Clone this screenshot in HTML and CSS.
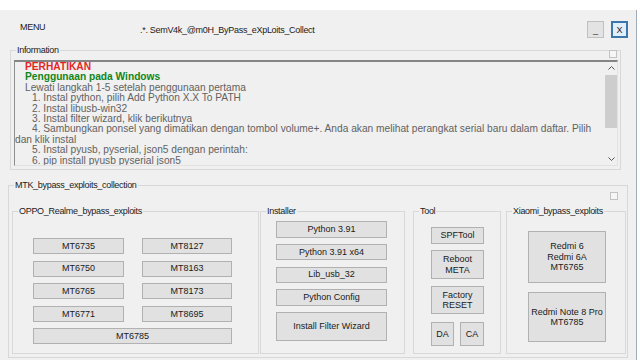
FILE: index.html
```html
<!DOCTYPE html>
<html>
  <head>
    <meta charset="utf-8">
    <title>SemV4k ByPass eXpLoits Collect</title>
    <link rel="stylesheet" href="styles.css">
  </head>
  <body>
    <div class="window">
      <div class="titlebar">
        <span class="menu">MENU</span>
        <span class="title">.*. SemV4k_@m0H_ByPass_eXpLoits_Collect</span>
        <div class="win-buttons">
          <button class="wbtn">_</button>
          <button class="wbtn close">X</button>
        </div>
      </div>

      <!-- caja de informacion -->
      <fieldset class="group info">
        <legend>Information</legend>
        <span class="check info-check"></span>
        <div class="textbox">
          <div class="lines">
            <div class="ind1 red">PERHATIKAN</div>
            <div class="ind1 green">Penggunaan pada Windows</div>
            <div class="ind1">Lewati langkah 1-5 setelah penggunaan pertama</div>
            <div class="ind2">1. Instal python, pilih Add Python X.X To PATH</div>
            <div class="ind2">2. Instal libusb-win32</div>
            <div class="ind2">3. Instal filter wizard, klik berikutnya</div>
            <div class="ind2">4. Sambungkan ponsel yang dimatikan dengan tombol volume+. Anda akan melihat perangkat serial baru dalam daftar. Pilih</div>
            <div>dan klik instal</div>
            <div class="ind2">5. Instal pyusb, pyserial, json5 dengan perintah:</div>
            <div class="ind2">6. pip install pyusb pyserial json5</div>
          </div>
          <div class="scrollbar">
            <span class="arrow">
              <svg width="7" height="4" viewBox="0 0 7 4"><polyline points="0.5,3.5 3.5,0.5 6.5,3.5" fill="none" stroke="#555" stroke-width="1"/></svg>
            </span>
            <span class="thumb"></span>
            <span class="arrow down">
              <svg width="7" height="4" viewBox="0 0 7 4"><polyline points="0.5,0.5 3.5,3.5 6.5,0.5" fill="none" stroke="#555" stroke-width="1"/></svg>
            </span>
          </div>
        </div>
      </fieldset>

      <!-- exploits -->
      <fieldset class="group mtk">
        <legend>MTK_bypass_exploits_collection</legend>
        <span class="check mtk-check"></span>
        <div class="subgroups">
          <fieldset class="group oppo">
            <legend>OPPO_Realme_bypass_exploits</legend>
            <div class="oppo-body">
              <button class="btn">MT6735</button>
              <button class="btn">MT8127</button>
              <button class="btn">MT6750</button>
              <button class="btn">MT8163</button>
              <button class="btn">MT6765</button>
              <button class="btn">MT8173</button>
              <button class="btn">MT6771</button>
              <button class="btn">MT8695</button>
              <button class="btn wide">MT6785</button>
            </div>
          </fieldset>

          <fieldset class="group installer">
            <legend>Installer</legend>
            <div class="installer-body">
              <button class="btn h17">Python 3.91</button>
              <button class="btn h16">Python 3.91 x64</button>
              <button class="btn h16">Lib_usb_32</button>
              <button class="btn h17">Python Config</button>
              <button class="btn h29">Install Filter Wizard</button>
            </div>
          </fieldset>

          <fieldset class="group tool">
            <legend>Tool</legend>
            <div class="tool-body">
              <button class="btn spf">SPFTool</button>
              <button class="btn reboot">Reboot<br>META</button>
              <button class="btn factory">Factory<br>RESET</button>
              <div class="pair">
                <button class="btn da">DA</button>
                <button class="btn ca">CA</button>
              </div>
            </div>
          </fieldset>

          <fieldset class="group xiaomi">
            <legend>Xiaomi_bypass_exploits</legend>
            <div class="xiaomi-body">
              <button class="btn redmi6">Redmi 6<br>Redmi 6A<br>MT6765</button>
              <button class="btn note8">Redmi Note 8 Pro<br>MT6785</button>
            </div>
          </fieldset>
        </div>
      </fieldset>
    </div>
  </body>
</html>
```

FILE: styles.css
```css
body {
  margin: 0;
  background: #ffffff;
  font-family: "Liberation Sans", Arial, sans-serif;
  color: #1a1a1a;
}
.window {
  margin-top: 10px;
  width: 636px;
  height: 350px;
  background: #f0f0f0;
  border-right: 1px solid #9eabb9;
  overflow: hidden;
}
.titlebar {
  display: flex;
  align-items: flex-start;
  height: 35px;
  padding-left: 20px;
  font-size: 9px;
  letter-spacing: -0.3px;
  line-height: 10px;
}
.menu {
  width: 120px;
  margin-top: 12px;
}
.title {
  flex: 1;
  margin-top: 15px;
}
.win-buttons {
  display: flex;
  gap: 7px;
  margin-top: 11px;
  margin-right: 8px;
}
.wbtn {
  width: 17px;
  height: 17px;
  padding: 0;
  box-sizing: border-box;
  background: #e3e3e3;
  border: 1px solid #c0c0c0;
  font-family: "Liberation Sans", Arial, sans-serif;
  font-size: 9px;
  color: #333;
  line-height: 10px;
}
.wbtn.close {
  border: 2px solid #3a77ad;
  background: #e2eefa;
  color: #222;
}

/* group box */
.group {
  position: relative;
  margin: 0;
  padding: 0;
  min-width: 0;
  box-sizing: border-box;
  border: 1px solid #d8d8d8;
}
.group > legend {
  margin-left: 5px;
  padding: 0 1px;
  font-size: 9px;
  line-height: 10px;
  letter-spacing: -0.3px;
  color: #1a1a1a;
}
.check {
  position: absolute;
  width: 8px;
  height: 8px;
  border: 1px solid #c3c3c3;
  background: #f6f6f6;
  box-sizing: border-box;
}
.info-check {
  top: -5px;
  right: 3px;
}
.mtk-check {
  top: 2px;
  right: 9px;
}

.info {
  margin-left: 10px;
  width: 611px;
  height: 125px;
}
.textbox {
  display: flex;
  margin: 5px 0 0 3px;
  width: 604px;
  height: 106px;
  box-sizing: border-box;
  border-top: 2px solid #858585;
  border-left: 1px solid #8e8e8e;
  border-right: 1px solid #e2e2e2;
  border-bottom: 1px solid #e2e2e2;
  background: #f0f0f0;
}
.lines {
  flex: 1;
  overflow: hidden;
  white-space: nowrap;
  font-size: 10.2px;
  line-height: 10.4px;
  color: #626262;
}
.ind1 {
  padding-left: 10px;
}
.ind2 {
  padding-left: 17px;
}
.red {
  color: #e3261f;
  font-weight: bold;
}
.green {
  color: #10861a;
  font-weight: bold;
}
.scrollbar {
  display: flex;
  flex-direction: column;
  width: 12px;
  background: #f0f0f0;
}
.arrow {
  display: flex;
  align-items: center;
  justify-content: center;
  height: 12px;
}
.thumb {
  height: 53px;
  margin: 1px 0;
  background: #cdcdcd;
}
.arrow.down {
  margin-top: auto;
}

.mtk {
  margin: 10px 8px 0 8px;
  width: 620px;
  height: 178px;
}
.subgroups {
  display: flex;
  padding: 16px 0 0 3px;
}
.subgroups .group {
  height: 148px;
}
.oppo {
  width: 247px;
}
.installer {
  width: 145px;
  margin-left: 1px;
}
.tool {
  width: 88px;
  margin-left: 8px;
}
.xiaomi {
  width: 120px;
  margin-left: 5px;
}

.btn {
  padding: 0;
  box-sizing: border-box;
  background: #e1e1e1;
  border: 1px solid #b1b1b1;
  font-family: "Liberation Sans", Arial, sans-serif;
  font-size: 9px;
  line-height: 10.5px;
  color: #1a1a1a;
}

.oppo-body {
  display: grid;
  grid-template-columns: 91px 90px;
  grid-auto-rows: 16px;
  column-gap: 18px;
  row-gap: 6.6px;
  padding: 22px 0 0 20px;
}
.oppo-body .wide {
  grid-column: 1 / 3;
}

.installer-body {
  display: flex;
  flex-direction: column;
  gap: 6.3px;
  padding: 5px 0 0 15px;
}
.installer-body .btn {
  width: 111px;
}
.h16 { height: 16px; }
.h17 { height: 17px; }
.h29 { height: 29px; }

.tool-body {
  display: flex;
  flex-direction: column;
  padding: 11px 0 0 17px;
}
.tool-body .btn {
  width: 53px;
}
.spf { height: 17px; }
.reboot { height: 29px; margin-top: 6px; }
.factory { height: 28px; margin-top: 7px; }
.pair {
  display: flex;
  gap: 6px;
  margin-top: 8px;
}
.tool-body .pair .da { width: 23px; height: 24px; }
.tool-body .pair .ca { width: 24px; height: 24px; }

.xiaomi-body {
  display: flex;
  flex-direction: column;
  padding: 15px 0 0 21px;
}
.xiaomi-body .btn {
  width: 78px;
}
.redmi6 { height: 52px; }
.note8 { height: 50px; margin-top: 9px; }
```
